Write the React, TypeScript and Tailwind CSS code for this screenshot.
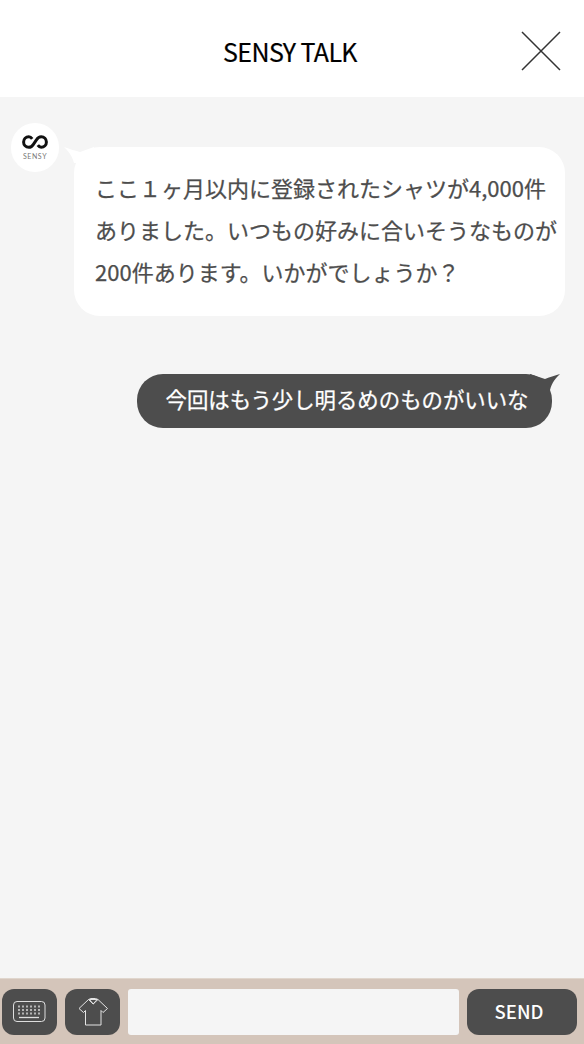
import React from 'react';

const FONT = "font-['Noto_Sans_CJK_JP','Noto_Sans',sans-serif]";

// Interlocked loop mark from the avatar, open at the crossing on each side
const SensyLogo = () => (
  <div className="flex flex-col items-center">
    <svg width="26" height="14" viewBox="0 0 26 14" fill="none" stroke="#111" strokeWidth="3">
      <path d="M10.200 3.800 C9.200 2.400 8 1.700 6.800 1.700 C3.800 1.700 1.600 4 1.600 7 C1.600 10 3.800 12.300 6.800 12.300 C8.800 12.300 10.400 11 11.400 9.400 L14.600 4.600 C15.600 3 17.200 1.700 19.200 1.700 C22.200 1.700 24.400 4 24.400 7 C24.400 10 22.200 12.300 19.200 12.300 C18 12.300 16.800 11.600 15.800 10.200" />
    </svg>
    <span className="mt-[3px] text-[7px] leading-[8px] tracking-[0.6px] text-[#777] font-['Lato',sans-serif]">SENSY</span>
  </div>
);

const KeyboardIcon = () => (
  <svg width="33" height="22" viewBox="0 0 33 22" fill="none" stroke="#dedede">
    <rect x="0.500" y="0.500" width="31.500" height="20" rx="3.500" strokeWidth="1" />
    {[4.500, 8, 11.500].map((y) =>
      [5, 9, 13, 17, 21, 25].map((x) => <rect key={`${x}-${y}`} x={x} y={y} width="2" height="2" fill="#b5b5b5" stroke="none" />)
    )}
    <path d="M6 16.500H26" strokeWidth="1.300" />
  </svg>
);

const ShirtIcon = () => (
  <svg width="30" height="28" viewBox="0 0 30 28" fill="none" stroke="#e4e4e4" strokeWidth="1" strokeLinejoin="round">
    <path d="M10.500 1.500 L1 10.500 L5.500 14.500 L7.500 12.500 V27 H23 V12.500 L25 14.500 L29.500 10.500 L20 1.500 L15.200 6 Z" />
    <path d="M10.500 1.500 L13 0.500 H17.500 L20 1.500 M11.500 1.500 H19 L15.200 6 Z" />
  </svg>
);

export default function App() {
  return (
    <div className={`flex h-[1044px] w-[584px] flex-col overflow-hidden bg-[#f5f5f5] ${FONT}`}>
      <header className="flex h-[97px] shrink-0 items-center bg-white">
        <div className="flex-1 pl-[59px] pt-[6px] text-center text-[25px] font-normal tracking-[-0.6px] text-black [-webkit-text-stroke:0.2px]">SENSY TALK</div>
        <button className="mr-[23px] mt-[5px] h-[40px] w-[40px]">
          <svg width="40" height="40" viewBox="0 0 40 40" stroke="#333" strokeWidth="1.500">
            <path d="M1 1L39 39M39 1L1 39" />
          </svg>
        </button>
      </header>

      <main className="flex-1">
        <div className="flex pl-[11px] pt-[26px]">
          <div className="flex h-[49px] w-[48px] shrink-0 items-center justify-center rounded-full bg-white">
            <SensyLogo />
          </div>
          <div className="relative ml-[15px] mt-[24px] h-[169px] w-[491px] rounded-[26px] bg-white pl-[21px] pt-[19px] text-[22px] font-normal leading-[42px] text-[#4d4d4d] [-webkit-text-stroke:0.25px]">
            <svg className="absolute left-[-10px] top-0" width="30" height="16" viewBox="0 0 30 16" fill="#fff">
              <path d="M0 0 C6 2 12 4 16 5 L30 0 V16 H10 C8 8 4 4 0 0Z" />
            </svg>
            <p className="relative whitespace-nowrap">
              ここ１ヶ月以内に登録されたシャツが4,000件
              <br />
              ありました。いつもの好みに合いそうなものが
              <br />
              200件あります。いかがでしょうか？
            </p>
          </div>
        </div>

        <div className="mt-[58px] flex justify-end pr-[32px]">
          <div className="relative flex h-[54px] w-[415px] items-center justify-center rounded-[26px] bg-[#4d4d4d] pl-[5px] text-[21.4px] font-normal text-white [-webkit-text-stroke:0.25px]">
            <svg className="absolute right-[-8px] top-0" width="30" height="16" viewBox="0 0 30 16" fill="#4d4d4d">
              <path d="M30 0 C26 1 20 3 15 5 L0 0 V16 H20 C22 8 26 4 30 0Z" />
            </svg>
            <span className="relative -mt-[3px] whitespace-nowrap">今回はもう少し明るめのものがいいな</span>
          </div>
        </div>
      </main>

      <footer className="flex h-[66px] shrink-0 items-center gap-[8px] border-t border-[#e0d6cd] bg-[#d4c5ba] pl-[2px] pr-[7px]">
        <button className="flex h-[46px] w-[55px] items-center justify-center rounded-[12px] bg-[#4d4d4d]">
          <KeyboardIcon />
        </button>
        <button className="flex h-[46px] w-[55px] items-center justify-center rounded-[12px] bg-[#4d4d4d]">
          <ShirtIcon />
        </button>
        <div className="h-[46px] flex-1 rounded-[3px] bg-[#f5f5f5]" />
        <button className="h-[46px] w-[110px] rounded-[12px] bg-[#4d4d4d] pr-[6px] text-[18.5px] font-medium text-white">SEND</button>
      </footer>
    </div>
  );
}
